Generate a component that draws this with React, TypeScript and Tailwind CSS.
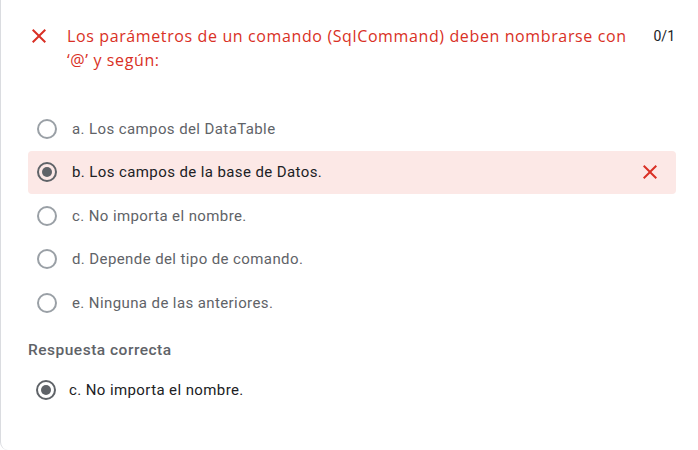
import React from "react";

function Radio({ checked }: { checked?: boolean }) {
  return (
    <div
      className={`flex h-5 w-5 shrink-0 items-center justify-center rounded-full border-2 ${
        checked ? "border-[#5f6368]" : "border-[#9aa0a6]"
      }`}
    >
      {checked && <div className="h-2.5 w-2.5 rounded-full bg-[#5f6368]" />}
    </div>
  );
}

function XIcon({ className }: { className?: string }) {
  return (
    <svg viewBox="0 0 24 24" className={className} fill="currentColor">
      <path d="M19 6.41 17.59 5 12 10.59 6.41 5 5 6.41 10.59 12 5 17.59 6.41 19 12 13.41 17.59 19 19 17.59 13.41 12z" />
    </svg>
  );
}

const options = [
  "a. Los campos del DataTable",
  "b. Los campos de la base de Datos.",
  "c. No importa el nombre.",
  "d. Depende del tipo de comando.",
  "e. Ninguna de las anteriores.",
];

export default function App() {
  return (
    <div
      className="h-[450px] w-[698px] overflow-hidden bg-white"
      style={{ fontFamily: "Roboto, Arial, sans-serif" }}
    >
      <div className="h-[450px] rounded-bl-lg border-l border-[#dadce0] bg-white">
        <div className="flex pl-[26px] pr-[23px] pt-[24px]">
          <XIcon className="h-6 w-6 shrink-0 text-[#d93025]" />
          <div
            className="ml-[16px] w-[572px] text-[16px] leading-6 tracking-[0.62px] text-[#d93025]"
            style={{ fontFamily: "'Open Sans', Roboto, sans-serif" }}
          >
            Los parámetros de un comando (SqlCommand) deben nombrarse con ‘@’ y según:
          </div>
          <div className="ml-auto pt-[2px] text-[14px] leading-5 text-[#202124]">0/1</div>
        </div>

        <div className="mt-[35px] flex flex-col pl-[27px] pr-[22px]">
          {options.map((o, i) => {
            const selected = i === 1;
            return (
              <div
                key={o}
                className={`flex h-[43.5px] items-center rounded pl-[9px] pr-[14px] ${
                  selected ? "bg-[#fce8e6]" : ""
                }`}
              >
                <Radio checked={selected} />
                <span
                  className={`ml-[15px] text-[15px] tracking-[0.4px] ${
                    selected ? "text-[#202124]" : "text-[#5f6368]"
                  }`}
                >
                  {o}
                </span>
                {selected && <XIcon className="ml-auto h-6 w-6 text-[#d93025]" />}
              </div>
            );
          })}
        </div>

        <div className="mt-[15px] pl-[27px] text-[15.5px] font-medium leading-5 tracking-[0.5px] text-[#5f6368]">
          Respuesta correcta
        </div>
        <div className="mt-[19px] flex items-center pl-[35px]">
          <Radio checked />
          <span className="ml-[13px] text-[15px] tracking-[0.4px] text-[#202124]">
            c. No importa el nombre.
          </span>
        </div>
      </div>
    </div>
  );
}
